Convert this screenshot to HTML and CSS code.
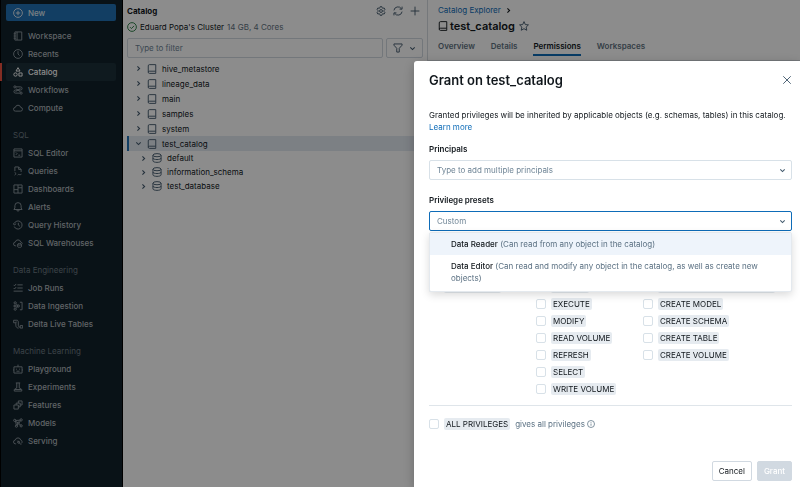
FILE: index.html
```html
<!DOCTYPE html>
<html lang="en">
<head>
  <meta charset="UTF-8">
  <meta name="viewport" content="width=device-width, initial-scale=1.0">
  <title>test_catalog - Catalog Explorer</title>
  <link rel="stylesheet" href="styles.css">
</head>
<body>
  <!-- Icon sprite -->
  <svg class="sprite" aria-hidden="true">
    <symbol id="i-new" viewBox="0 0 16 16"><circle cx="8" cy="8" r="7"/><path d="M8 4.5v7M4.5 8h7"/></symbol>
    <symbol id="i-workspace" viewBox="0 0 16 16"><path d="M3 1.5h11v13H3zM6.5 1.5v13M1 4.5h4M1 8h4M1 11.5h4"/></symbol>
    <symbol id="i-recents" viewBox="0 0 16 16"><circle cx="8" cy="8" r="7"/><path d="M8 3.5V8l2.5 2.5"/></symbol>
    <symbol id="i-catalog" viewBox="0 0 16 16"><path d="M8 1l3.2 5.5H4.8zM9.5 9.5h5v5h-5z"/><circle cx="4" cy="12" r="2.7"/></symbol>
    <symbol id="i-workflows" viewBox="0 0 16 16"><path d="M4.5 3H12a2.5 2.5 0 0 1 0 5H4a2.5 2.5 0 0 0 0 5h7M4 10.500l8-5M5 6l7 5"/><circle cx="3" cy="3" r="1.700"/><circle cx="13" cy="13" r="1.700"/></symbol>
    <symbol id="i-cloud" viewBox="0 0 16 16"><path d="M4 13a3 3 0 0 1-.3-6 4.400 4.400 0 0 1 8.600 0A3 3 0 0 1 12 13z"/></symbol>
    <symbol id="i-editor" viewBox="0 0 16 16"><path d="M1.500 1.500h13v13h-13zM1.500 4.500h13M4.500 7l2 2-2 2M8.500 11.500h3"/></symbol>
    <symbol id="i-queries" viewBox="0 0 16 16"><path d="M3 8V1.500h6L13 5.500v4M9 1.500v4h4M2.500 10l2.500 2.200-2.500 2.300M7.500 14.500c1.500-2.500 3 1 6-1.500"/></symbol>
    <symbol id="i-dashboards" viewBox="0 0 16 16"><path d="M1.500 1.500h13v13h-13zM8 1.500v13M1.500 9H8M8 6h6.500"/></symbol>
    <symbol id="i-alerts" viewBox="0 0 16 16"><path d="M1.500 12h13L13 9.500V6A5 5 0 0 0 3 6v3.500zM6 12.500a2 2 0 0 0 4 0"/></symbol>
    <symbol id="i-history" viewBox="0 0 16 16"><path d="M2 5.500A6.500 6.500 0 1 1 2 10.500M0 5l2 3 3-2M8.500 4.500V8l2.500 2"/></symbol>
    <symbol id="i-warehouse" viewBox="0 0 16 16"><path d="M5 12.500H4a3 3 0 0 1-.3-6 4.400 4.400 0 0 1 8.600 0c1.500.3 2.500 1.200 2.700 2.500M7.500 10v4c0 1.300 6 1.300 6 0v-4"/><ellipse cx="10.500" cy="10" rx="3" ry="1.300"/></symbol>
    <symbol id="i-jobs" viewBox="0 0 16 16"><path d="M7 3h8.500M7 8h8.500M1 13h14.500M1 3l1.500 1.500L5 1.500M1 8l1.500 1.500L5 6.500"/></symbol>
    <symbol id="i-ingestion" viewBox="0 0 16 16"><path d="M11 2h3.500v12H11M5 4.500l3 3M5 11.500l3-3M2 8h6"/><circle cx="3.500" cy="3" r="1.800"/><circle cx="3.500" cy="13" r="1.800"/><circle cx="8.500" cy="8" r="1.800"/><circle cx="2.500" cy="8" r="1.300"/></symbol>
    <symbol id="i-delta" viewBox="0 0 16 16"><path d="M1 6V2h5c2 0 2.500 1.500 2.500 3v5c0 2 1 3 3 3M4.500 6.500V10c0 3 2 4.500 4.500 4.500M1 6h4V4M11.500 10.500h4v4h-4z"/></symbol>
    <symbol id="i-playground" viewBox="0 0 16 16"><path d="M1.500 4.500h13v10h-13zM8 1v3.500M5.500 7.500v1.500M10.500 7.500v1.500M5.500 11.500h5M0 8v3M16 8v3"/></symbol>
    <symbol id="i-experiments" viewBox="0 0 16 16"><path d="M4.500 1.500h7M6 1.500v8L2 12v2.500h12V12l-4-2.500v-8M3 12h10"/></symbol>
    <symbol id="i-features" viewBox="0 0 16 16"><path d="M1.500 8h7v6.500h-7zM5 8V5h6.500v6H8.500M8.500 5V1.500h6V8h-3"/></symbol>
    <symbol id="i-models" viewBox="0 0 16 16"><path d="M4 4l8-.5M4 5l4 3M4 5l1.500 7M9 8l3-3.500M8 9l-1.500 3M9.500 9l3 3"/><circle cx="2.800" cy="3.800" r="1.800"/><circle cx="13" cy="3" r="1.800"/><circle cx="8.500" cy="8" r="1.600"/><circle cx="5.500" cy="13" r="1.800"/><circle cx="13" cy="12.500" r="1.800"/></symbol>
    <symbol id="i-serving" viewBox="0 0 16 16"><path d="M5 12.500H4a3 3 0 0 1-.3-6 4.400 4.400 0 0 1 8.600 0 3 3 0 0 1 .7 5.500M7 7.500l2.500 2.500M9.500 10.500l3.500 3.500"/><circle cx="9" cy="10" r="1.600"/></symbol>
    <symbol id="i-gear" viewBox="0 0 16 16"><path d="M6.700 1h2.600l.5 2 1.200.7 2-.6 1.300 2.300L12.900 7v2l1.400 1.600-1.300 2.300-2-.6-1.200.7-.5 2H6.700l-.5-2-1.200-.7-2 .6-1.300-2.300L3.100 9V7L1.700 5.400 3 3.100l2 .6L6.200 3z"/><circle cx="8" cy="8" r="2.300"/></symbol>
    <symbol id="i-refresh" viewBox="0 0 16 16"><path d="M1.500 7a6.500 6.500 0 0 1 12-2.500M14.500 1v4h-4M14.500 9a6.500 6.500 0 0 1-12 2.500M1.500 15v-4h4"/></symbol>
    <symbol id="i-plus" viewBox="0 0 16 16"><path d="M8 1v14M1 8h14"/></symbol>
    <symbol id="i-check" viewBox="0 0 16 16"><circle cx="8" cy="8" r="7"/><path d="M4.800 8.200l2.300 2.300 4.200-4.300"/></symbol>
    <symbol id="i-filter" viewBox="0 0 16 16"><path d="M1.500 1.500h13v2L10 8.500v6H6v-6l-4.500-5z"/></symbol>
    <symbol id="i-down" viewBox="0 0 16 16"><path d="M3 5.500l5 5 5-5"/></symbol>
    <symbol id="i-right" viewBox="0 0 16 16"><path d="M5.500 3l5 5-5 5"/></symbol>
    <symbol id="i-book" viewBox="0 0 16 16"><path d="M14 11.500V1H4a2 2 0 0 0-2 2v10a2 2 0 0 0 2 2h10v-3.500H4a2 2 0 0 0-2 1.500"/></symbol>
    <symbol id="i-db" viewBox="0 0 16 16"><ellipse cx="8" cy="3.500" rx="6.500" ry="2.500"/><path d="M1.500 3.500v9c0 3.300 13 3.300 13 0v-9M1.500 8c0 3.300 13 3.300 13 0"/></symbol>
    <symbol id="i-star" viewBox="0 0 16 16"><path d="M8 1l2.100 4.700 5 .5-3.700 3.500 1 5.100L8 12.300l-4.400 2.500 1-5.100L.9 6.200l5-.5z"/></symbol>
    <symbol id="i-close" viewBox="0 0 16 16"><path d="M2 2l12 12M14 2L2 14"/></symbol>
    <symbol id="i-info" viewBox="0 0 16 16"><circle cx="8" cy="8" r="7"/><path d="M8 7v4.500M8 4.200v1.500"/></symbol>
  </svg>

  <div class="app">
    <!-- Sidebar -->
    <nav class="sidebar">
      <button class="new-btn" type="button"><svg class="icon"><use href="#i-new"/></svg>New</button>
      <div class="nav-group">
        <a class="nav-item" href="#"><svg class="icon"><use href="#i-workspace"/></svg>Workspace</a>
        <a class="nav-item" href="#"><svg class="icon"><use href="#i-recents"/></svg>Recents</a>
        <a class="nav-item active" href="#"><svg class="icon"><use href="#i-catalog"/></svg>Catalog</a>
        <a class="nav-item" href="#"><svg class="icon"><use href="#i-workflows"/></svg>Workflows</a>
        <a class="nav-item" href="#"><svg class="icon"><use href="#i-cloud"/></svg>Compute</a>
      </div>
      <div class="nav-label">SQL</div>
      <div class="nav-group">
        <a class="nav-item" href="#"><svg class="icon"><use href="#i-editor"/></svg>SQL Editor</a>
        <a class="nav-item" href="#"><svg class="icon"><use href="#i-queries"/></svg>Queries</a>
        <a class="nav-item" href="#"><svg class="icon"><use href="#i-dashboards"/></svg>Dashboards</a>
        <a class="nav-item" href="#"><svg class="icon"><use href="#i-alerts"/></svg>Alerts</a>
        <a class="nav-item" href="#"><svg class="icon"><use href="#i-history"/></svg>Query History</a>
        <a class="nav-item" href="#"><svg class="icon"><use href="#i-warehouse"/></svg>SQL Warehouses</a>
      </div>
      <div class="nav-label">Data Engineering</div>
      <div class="nav-group">
        <a class="nav-item" href="#"><svg class="icon"><use href="#i-jobs"/></svg>Job Runs</a>
        <a class="nav-item" href="#"><svg class="icon"><use href="#i-ingestion"/></svg>Data Ingestion</a>
        <a class="nav-item" href="#"><svg class="icon"><use href="#i-delta"/></svg>Delta Live Tables</a>
      </div>
      <div class="nav-label">Machine Learning</div>
      <div class="nav-group">
        <a class="nav-item" href="#"><svg class="icon"><use href="#i-playground"/></svg>Playground</a>
        <a class="nav-item" href="#"><svg class="icon"><use href="#i-experiments"/></svg>Experiments</a>
        <a class="nav-item" href="#"><svg class="icon"><use href="#i-features"/></svg>Features</a>
        <a class="nav-item" href="#"><svg class="icon"><use href="#i-models"/></svg>Models</a>
        <a class="nav-item" href="#"><svg class="icon"><use href="#i-serving"/></svg>Serving</a>
      </div>
    </nav>

    <!-- Catalog browser -->
    <section class="browser">
      <div class="browser-head">
        <h2>Catalog</h2>
        <button class="icon-btn" type="button" aria-label="Settings"><svg class="icon"><use href="#i-gear"/></svg></button>
        <button class="icon-btn" type="button" aria-label="Refresh"><svg class="icon"><use href="#i-refresh"/></svg></button>
        <button class="icon-btn" type="button" aria-label="Add"><svg class="icon"><use href="#i-plus"/></svg></button>
      </div>
      <div class="cluster">
        <svg class="icon ok"><use href="#i-check"/></svg>
        <span>Eduard Popa's Cluster</span>
        <span class="muted">14 GB, 4 Cores</span>
      </div>
      <div class="filter-row">
        <input class="filter" type="text" placeholder="Type to filter" aria-label="Type to filter">
        <button class="filter-btn" type="button" aria-label="Filter options"><svg class="icon"><use href="#i-filter"/></svg><svg class="chevron"><use href="#i-down"/></svg></button>
      </div>
      <ul class="tree">
        <li class="node"><svg class="chevron"><use href="#i-right"/></svg><svg class="icon"><use href="#i-book"/></svg>hive_metastore</li>
        <li class="node"><svg class="chevron"><use href="#i-right"/></svg><svg class="icon"><use href="#i-book"/></svg>lineage_data</li>
        <li class="node"><svg class="chevron"><use href="#i-right"/></svg><svg class="icon"><use href="#i-book"/></svg>main</li>
        <li class="node"><svg class="chevron"><use href="#i-right"/></svg><svg class="icon"><use href="#i-book"/></svg>samples</li>
        <li class="node"><svg class="chevron"><use href="#i-right"/></svg><svg class="icon"><use href="#i-book"/></svg>system</li>
        <li class="node selected"><svg class="chevron"><use href="#i-down"/></svg><svg class="icon"><use href="#i-book"/></svg>test_catalog</li>
        <li class="node child"><svg class="chevron"><use href="#i-right"/></svg><svg class="icon"><use href="#i-db"/></svg>default</li>
        <li class="node child"><svg class="chevron"><use href="#i-right"/></svg><svg class="icon"><use href="#i-db"/></svg>information_schema</li>
        <li class="node child"><svg class="chevron"><use href="#i-right"/></svg><svg class="icon"><use href="#i-db"/></svg>test_database</li>
      </ul>
    </section>

    <!-- Catalog details -->
    <main class="details">
      <div class="crumbs"><a href="#">Catalog Explorer</a><svg class="chevron"><use href="#i-right"/></svg></div>
      <h1><svg class="icon"><use href="#i-book"/></svg>test_catalog<svg class="icon star"><use href="#i-star"/></svg></h1>
      <div class="tabs">
        <a class="tab" href="#">Overview</a>
        <a class="tab" href="#">Details</a>
        <a class="tab current" href="#">Permissions</a>
        <a class="tab" href="#">Workspaces</a>
      </div>
    </main>
  </div>

  <!-- Grant dialog -->
  <div class="overlay">
    <form class="dialog" role="dialog" aria-labelledby="dialogTitle">
      <div class="dialog-head">
        <h2 id="dialogTitle">Grant on test_catalog</h2>
        <button class="icon-btn" type="button" aria-label="Close"><svg class="icon"><use href="#i-close"/></svg></button>
      </div>
      <p class="intro">Granted privileges will be inherited by applicable objects (e.g. schemas, tables) in this catalog. <a href="#">Learn more</a></p>

      <label class="field-label" for="principals">Principals</label>
      <div class="field">
        <input class="control" type="text" id="principals" placeholder="Type to add multiple principals">
        <svg class="chevron"><use href="#i-down"/></svg>
      </div>

      <label class="field-label" for="presets">Privilege presets</label>
      <div class="field">
        <select class="control open" id="presets">
          <option>Custom</option>
        </select>
        <svg class="chevron"><use href="#i-down"/></svg>
        <div class="menu" role="listbox" aria-label="Privilege presets">
          <div class="option hover" role="option"><b>Data Reader</b> (Can read from any object in the catalog)</div>
          <div class="option" role="option"><b>Data Editor</b> (Can read and modify any object in the catalog, as well as create new objects)</div>
        </div>
      </div>

      <div class="privileges">
        <div class="column">
          <label class="priv"><input type="checkbox"><span class="chip">USE SCHEMA</span></label>
        </div>
        <div class="column">
          <label class="priv"><input type="checkbox"><span class="chip">BROWSE</span></label>
          <label class="priv"><input type="checkbox"><span class="chip">EXECUTE</span></label>
          <label class="priv"><input type="checkbox"><span class="chip">MODIFY</span></label>
          <label class="priv"><input type="checkbox"><span class="chip">READ VOLUME</span></label>
          <label class="priv"><input type="checkbox"><span class="chip">REFRESH</span></label>
          <label class="priv"><input type="checkbox"><span class="chip">SELECT</span></label>
          <label class="priv"><input type="checkbox"><span class="chip">WRITE VOLUME</span></label>
        </div>
        <div class="column">
          <label class="priv"><input type="checkbox"><span class="chip">CREATE MATERIALIZED VIEW</span></label>
          <label class="priv"><input type="checkbox"><span class="chip">CREATE MODEL</span></label>
          <label class="priv"><input type="checkbox"><span class="chip">CREATE SCHEMA</span></label>
          <label class="priv"><input type="checkbox"><span class="chip">CREATE TABLE</span></label>
          <label class="priv"><input type="checkbox"><span class="chip">CREATE VOLUME</span></label>
        </div>
      </div>

      <div class="all">
        <label class="priv"><input type="checkbox"><span class="chip">ALL PRIVILEGES</span></label>
        <span class="hint">gives all privileges<svg class="icon"><use href="#i-info"/></svg></span>
      </div>

      <div class="dialog-foot">
        <button class="btn" type="button">Cancel</button>
        <button class="btn primary" type="submit" disabled>Grant</button>
      </div>
    </form>
  </div>
</body>
</html>
```
FILE: styles.css
```css
* {
  box-sizing: border-box;
}
body {
  margin: 0;
  font-family: Inter, "Liberation Sans", sans-serif;
  font-size: 8px;
  line-height: 12px;
  color: #11171c;
  background: #fff;
}
h1, h2, p, ul {
  margin: 0;
  padding: 0;
}
a {
  color: #0e6cb8;
  text-decoration: none;
}
button, input, select {
  font: inherit;
  color: inherit;
  margin: 0;
}
button {
  padding: 0;
  border: none;
  background: none;
}
.sprite {
  display: none;
}
.icon, .chevron {
  flex: none;
  width: 10px;
  height: 10px;
  fill: none;
  stroke: currentColor;
  stroke-width: 1.5;
}
.chevron {
  width: 7px;
  height: 7px;
  stroke-width: 2.5;
}
.icon-btn {
  display: flex;
  color: #445b6e;
}
.app {
  display: flex;
  min-height: 100vh;
}

/* Sidebar */
.sidebar {
  flex: none;
  width: 123px;
  padding: 4px 6px 4px 5px;
  background: #12222b;
  border-left: 1px solid #000;
  border-right: 1px solid #000;
}
.new-btn {
  display: flex;
  align-items: center;
  gap: 5px;
  width: 100%;
  height: 17px;
  margin-bottom: 6px;
  padding-left: 7px;
  border-radius: 2px;
  background: #2272b4;
  color: #dfe8f0;
  font-weight: 500;
}
.nav-item {
  position: relative;
  display: flex;
  align-items: center;
  gap: 5px;
  height: 18px;
  padding-left: 7px;
  border-radius: 2px;
  color: #b0b7bc;
  font-weight: 500;
}
.nav-item .icon {
  color: #8b969e;
}
.nav-item.active {
  background: #1c3039;
  color: #fff;
}
.nav-item.active .icon {
  color: #fff;
}
.nav-item.active::before {
  content: "";
  position: absolute;
  left: -6px;
  top: 0;
  width: 2px;
  height: 18px;
  background: #ee5340;
}
.nav-label {
  margin-top: 9px;
  padding-left: 7px;
  line-height: 18px;
  color: #6e7b84;
}

/* Catalog browser */
.browser {
  flex: none;
  width: 305px;
  padding: 5px 4px;
  border-right: 1px solid #d5dbe0;
}
.browser-head {
  display: flex;
  align-items: center;
  gap: 7px;
  padding-right: 3px;
}
.browser-head h2 {
  flex: 1;
  font-size: 8px;
  font-weight: 700;
}
.cluster {
  display: flex;
  align-items: center;
  gap: 3px;
  margin: 4px 0 5px;
}
.cluster .ok {
  color: #277c43;
}
.cluster .muted {
  color: #5f7281;
}
.filter-row {
  display: flex;
  gap: 3px;
}
.filter {
  flex: 1;
  min-width: 0;
  height: 20px;
  padding: 0 7px;
  border: 1px solid #d1d9e1;
  border-radius: 2px;
  background: transparent;
}
::placeholder {
  color: #6f8596;
  opacity: 1;
}
.filter-btn {
  display: flex;
  align-items: center;
  justify-content: center;
  gap: 6px;
  width: 37px;
  border: 1px solid #d1d9e1;
  border-radius: 2px;
  color: #445b6e;
}
.tree {
  margin-top: 3px;
  list-style: none;
}
.node {
  display: flex;
  align-items: center;
  gap: 5px;
  height: 15px;
  padding-left: 6px;
  border-left: 2px solid transparent;
}
.node .icon, .node .chevron {
  color: #445b6e;
}
.node.selected {
  margin-right: -4px;
  border-color: #2272b4;
  background: #e2e9f1;
}
.node.child {
  height: 14px;
  padding-left: 11px;
}

/* Catalog details */
.details {
  flex: 1;
  min-width: 0;
  padding-top: 4px;
}
.crumbs {
  display: flex;
  align-items: center;
  gap: 4px;
  padding-left: 10px;
}
.details h1 {
  display: flex;
  align-items: center;
  gap: 2px;
  padding-left: 10px;
  font-size: 11px;
  font-weight: 600;
  line-height: 20px;
}
.details .star {
  margin-left: 2px;
  color: #445b6e;
}
.tabs {
  display: flex;
  gap: 16px;
  margin-top: 2px;
  padding: 0 10px 4px;
  border-bottom: 1px solid #d5dbe0;
}
.tab {
  height: 18px;
  line-height: 16px;
  font-weight: 600;
  color: #5f7281;
}
.tab.current {
  color: #11171c;
  border-bottom: 2px solid #0e6cb8;
}

/* Grant dialog */
.overlay {
  position: fixed;
  inset: 0;
  display: flex;
  justify-content: flex-end;
  padding-top: 61px;
  background: rgba(0, 0, 0, 0.45);
}
.dialog {
  display: flex;
  flex-direction: column;
  width: 386px;
  padding: 9px 8px 6px 15px;
  border-top-left-radius: 3px;
  background: #fff;
  box-shadow: 0 3px 12px rgba(0, 0, 0, 0.25);
}
.dialog-head {
  display: flex;
  align-items: center;
  justify-content: space-between;
}
.dialog-head h2 {
  font-size: 13px;
  font-weight: 600;
  line-height: 20px;
}
.intro {
  margin-top: 19px;
}
.field-label {
  margin: 10px 0 5px;
  font-weight: 600;
}
.field {
  position: relative;
  display: flex;
  align-items: center;
  margin-bottom: 4px;
}
.control {
  appearance: none;
  width: 100%;
  height: 20px;
  padding: 0 7px;
  border: 1px solid #d8e1e8;
  border-radius: 2px;
  background: #fff;
  color: #6f8596;
}
.control.open {
  border-color: #0e6cb8;
  outline: none;
}
.field .chevron {
  position: absolute;
  right: 6px;
  color: #445b6e;
}
.menu {
  position: absolute;
  top: 21px;
  left: 0;
  right: 0;
  padding-bottom: 2px;
  border: 1px solid #e4e9ee;
  border-radius: 2px;
  background: #fff;
  box-shadow: 0 3px 8px rgba(0, 0, 0, 0.15);
}
.option {
  padding: 5px 21px;
  color: #5a7082;
}
.option b {
  font-weight: 500;
  color: #11171c;
}
.option.hover {
  background: #eef4fb;
}
.privileges {
  display: grid;
  grid-template-columns: 107px 107px 1fr;
  margin-top: 43px;
  padding-bottom: 8px;
  border-bottom: 1px solid #dfe5ea;
}
.column {
  display: flex;
  flex-direction: column;
}
.priv {
  display: flex;
  align-items: center;
  gap: 5px;
  height: 17px;
  white-space: nowrap;
}
.priv input {
  appearance: none;
  width: 10px;
  height: 10px;
  border: 1px solid #d8e1e8;
  border-radius: 2px;
  background: #fff;
}
.chip {
  padding: 0 2px;
  border-radius: 2px;
  background: #e6ebf0;
}
.all {
  display: flex;
  align-items: center;
  gap: 5px;
  margin-top: 9px;
  color: #5a7082;
}
.all .chip {
  color: #11171c;
}
.hint {
  display: flex;
  align-items: center;
  gap: 2px;
}
.hint .icon {
  width: 8px;
  height: 8px;
}
.dialog-foot {
  display: flex;
  justify-content: flex-end;
  gap: 5px;
  margin-top: auto;
}
.btn {
  height: 20px;
  padding: 0 6px;
  border: 1px solid #d1d9e1;
  border-radius: 2px;
}
.btn.primary {
  border-color: #d1d9e1;
  background: #d1d9e1;
  color: #fff;
  font-weight: 500;
}
```
